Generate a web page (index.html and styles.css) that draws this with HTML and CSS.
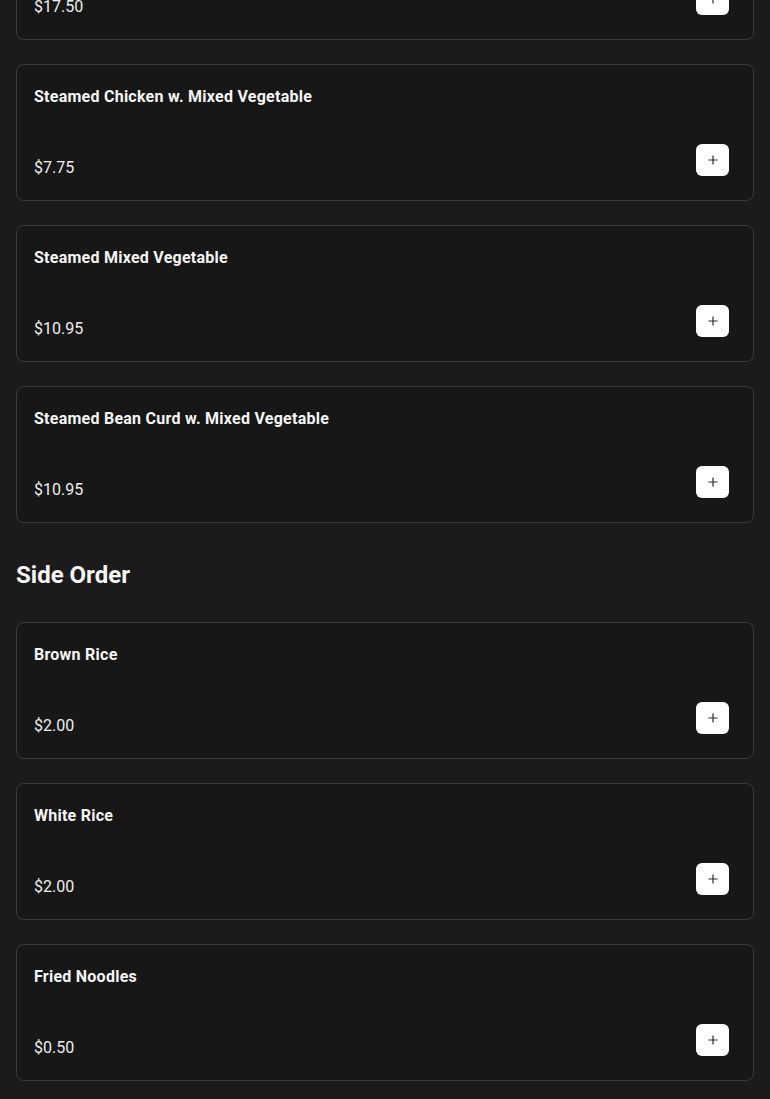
FILE: index.html
```html
<!DOCTYPE html>
<html lang="en">
  <head>
    <meta charset="UTF-8" />
    <meta name="viewport" content="width=device-width, initial-scale=1.0" />
    <title>Menu</title>
    <link rel="stylesheet" href="styles.css">
  </head>
  <body>
    <main class="menu">
      <section class="menu-section">
        <div class="item-list">
          <div class="item-card">
            <h3 class="item-name">Steamed Shrimp w. Mixed Vegetable</h3>
            <div class="item-footer">
              <span class="item-price">$17.50</span>
              <button class="add-btn" aria-label="Add">
                <svg viewBox="0 0 12 12" width="12" height="12"><path d="M6 1.5v9M1.5 6h9" /></svg>
              </button>
            </div>
          </div>
          <div class="item-card">
            <h3 class="item-name">Steamed Chicken w. Mixed Vegetable</h3>
            <div class="item-footer">
              <span class="item-price">$7.75</span>
              <button class="add-btn" aria-label="Add">
                <svg viewBox="0 0 12 12" width="12" height="12"><path d="M6 1.5v9M1.5 6h9" /></svg>
              </button>
            </div>
          </div>
          <div class="item-card">
            <h3 class="item-name">Steamed Mixed Vegetable</h3>
            <div class="item-footer">
              <span class="item-price">$10.95</span>
              <button class="add-btn" aria-label="Add">
                <svg viewBox="0 0 12 12" width="12" height="12"><path d="M6 1.5v9M1.5 6h9" /></svg>
              </button>
            </div>
          </div>
          <div class="item-card">
            <h3 class="item-name">Steamed Bean Curd w. Mixed Vegetable</h3>
            <div class="item-footer">
              <span class="item-price">$10.95</span>
              <button class="add-btn" aria-label="Add">
                <svg viewBox="0 0 12 12" width="12" height="12"><path d="M6 1.5v9M1.5 6h9" /></svg>
              </button>
            </div>
          </div>
        </div>
      </section>

      <section class="menu-section">
        <h2 class="section-title">Side Order</h2>
        <div class="item-list">
          <div class="item-card">
            <h3 class="item-name">Brown Rice</h3>
            <div class="item-footer">
              <span class="item-price">$2.00</span>
              <button class="add-btn" aria-label="Add">
                <svg viewBox="0 0 12 12" width="12" height="12"><path d="M6 1.5v9M1.5 6h9" /></svg>
              </button>
            </div>
          </div>
          <div class="item-card">
            <h3 class="item-name">White Rice</h3>
            <div class="item-footer">
              <span class="item-price">$2.00</span>
              <button class="add-btn" aria-label="Add">
                <svg viewBox="0 0 12 12" width="12" height="12"><path d="M6 1.5v9M1.5 6h9" /></svg>
              </button>
            </div>
          </div>
          <div class="item-card">
            <h3 class="item-name">Fried Noodles</h3>
            <div class="item-footer">
              <span class="item-price">$0.50</span>
              <button class="add-btn" aria-label="Add">
                <svg viewBox="0 0 12 12" width="12" height="12"><path d="M6 1.5v9M1.5 6h9" /></svg>
              </button>
            </div>
          </div>
        </div>
      </section>
    </main>
  </body>
</html>
```

FILE: styles.css
```css
body {
  margin: 0;
  background-color: #1b1b1b;
  color: #f4f4f4;
  font-family: Roboto, "Liberation Sans", sans-serif;
}

.menu {
  margin-top: -97px;
  padding: 0 16px 24px;
}

.item-list {
  display: flex;
  flex-direction: column;
  gap: 24px;
}

.section-title {
  margin: 36px 0 31px;
  font-size: 24px;
  line-height: 32px;
  font-weight: 700;
  color: #f5f5f5;
}

.item-card {
  background-color: #171717;
  border: 1px solid #3a3a3a;
  border-radius: 8px;
  padding: 17px 24px 24px 17px;
  box-sizing: border-box;
  height: 137px;
  display: flex;
  flex-direction: column;
  justify-content: space-between;
}

.item-name {
  margin: 0;
  font-size: 16px;
  line-height: 30px;
  font-weight: 700;
  letter-spacing: 0.25px;
  color: #f5f5f5;
}

.item-footer {
  display: flex;
  justify-content: space-between;
  align-items: flex-end;
}

.item-price {
  font-size: 16px;
  line-height: 24px;
  color: #ededed;
  margin-bottom: -4px;
}

.add-btn {
  width: 33px;
  height: 32px;
  border: none;
  border-radius: 6px;
  background-color: #ffffff;
  display: flex;
  align-items: center;
  justify-content: center;
  padding: 0;
  cursor: pointer;
}

.add-btn svg {
  fill: none;
  stroke: #2a2a2a;
  stroke-width: 1.2;
}
```
